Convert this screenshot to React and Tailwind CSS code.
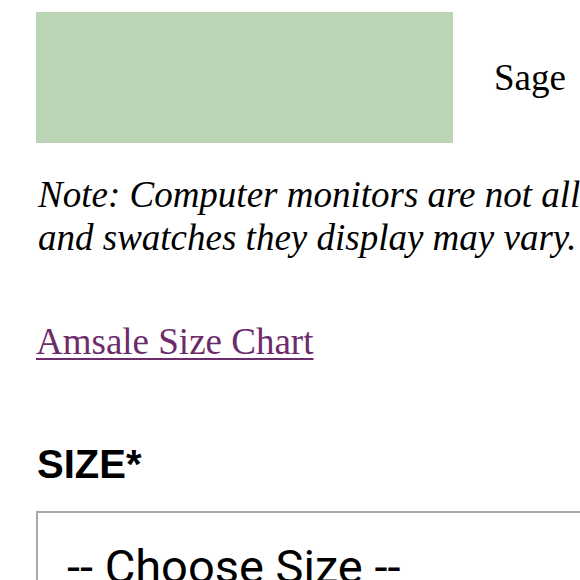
import React from 'react';

const App = () => {
  return (
    <div className="w-[580px] h-[580px] overflow-hidden bg-white pl-[36px] pt-[12px] font-['Liberation_Serif',serif] text-black">
      {/* Colour swatch */}
      <div className="flex items-center">
        <div className="w-[417px] h-[131px] shrink-0 bg-[#bad4b5]"></div>
        <span className="ml-[41px] text-[37px] leading-[41px] whitespace-nowrap">Sage</span>
      </div>

      {/* Note */}
      <p className="mt-[30px] pl-[2px] text-[37px] leading-[43px] italic whitespace-nowrap">
        Note: Computer monitors are not all calibrated equally
        <br />
        and swatches they display may vary.
      </p>

      {/* Size chart link */}
      <a href="#" className="block mt-[61px] w-fit text-[37px] leading-[43px] text-[#6c2b6a] underline decoration-[2px] underline-offset-[4px]">
        Amsale Size Chart
      </a>

      {/* Size selector */}
      <div className="mt-[81px] pl-[1px] font-['Liberation_Sans',Arial,sans-serif] font-bold text-[40px] leading-[40px]">
        SIZE*
      </div>
      <div className="mt-[27px] w-[700px] h-[120px] border-2 border-[#a9a9a9] pl-[29px] pt-[19px] font-['Roboto',sans-serif] text-[47px] text-black whitespace-nowrap">
        -- Choose Size --
      </div>
    </div>
  );
};

export default App;
